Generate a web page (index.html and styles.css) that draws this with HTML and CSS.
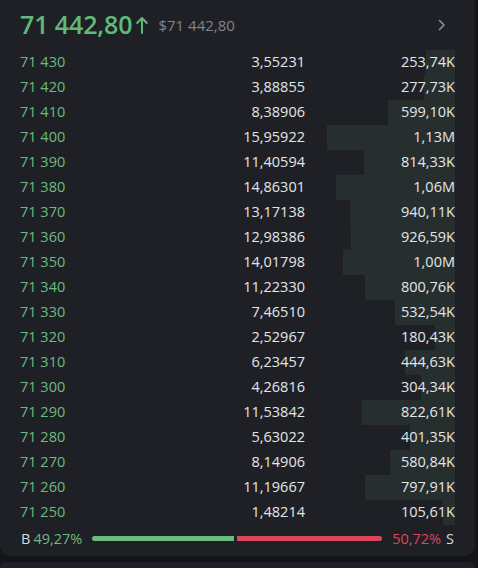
FILE: index.html
```html
<!DOCTYPE html>
<html>
<head>
<meta charset="utf-8">
<link rel="stylesheet" href="styles.css">
</head>
<body>
<div class="panel">
  <div class="header">
    <span class="last">71 442,80</span>
    <svg class="up" width="12" height="18" viewBox="0 0 12 18"><path d="M6 17V2M1.2 7L6 2l4.8 5" fill="none" stroke="#5fb97a" stroke-width="2" stroke-linecap="round" stroke-linejoin="round"/></svg>
    <span class="usd">$71 442,80</span>
    <svg class="chev" width="8" height="12" viewBox="0 0 8 12"><path d="M1.5 1.5L6 6l-4.5 4.5" fill="none" stroke="#8b8e95" stroke-width="1.6" stroke-linecap="round" stroke-linejoin="round"/></svg>
  </div>
  <div class="book">
    <div class="row"><span class="bar" style="width:29px"></span><span class="p">71 430</span><span class="q">3,55231</span><span class="t">253,74K</span></div>
    <div class="row"><span class="bar" style="width:31px"></span><span class="p">71 420</span><span class="q">3,88855</span><span class="t">277,73K</span></div>
    <div class="row"><span class="bar" style="width:67px"></span><span class="p">71 410</span><span class="q">8,38906</span><span class="t">599,10K</span></div>
    <div class="row"><span class="bar" style="width:128px"></span><span class="p">71 400</span><span class="q">15,95922</span><span class="t">1,13M</span></div>
    <div class="row"><span class="bar" style="width:91px"></span><span class="p">71 390</span><span class="q">11,40594</span><span class="t">814,33K</span></div>
    <div class="row"><span class="bar" style="width:119px"></span><span class="p">71 380</span><span class="q">14,86301</span><span class="t">1,06M</span></div>
    <div class="row"><span class="bar" style="width:105px"></span><span class="p">71 370</span><span class="q">13,17138</span><span class="t">940,11K</span></div>
    <div class="row"><span class="bar" style="width:104px"></span><span class="p">71 360</span><span class="q">12,98386</span><span class="t">926,59K</span></div>
    <div class="row"><span class="bar" style="width:112px"></span><span class="p">71 350</span><span class="q">14,01798</span><span class="t">1,00M</span></div>
    <div class="row"><span class="bar" style="width:90px"></span><span class="p">71 340</span><span class="q">11,22330</span><span class="t">800,76K</span></div>
    <div class="row"><span class="bar" style="width:60px"></span><span class="p">71 330</span><span class="q">7,46510</span><span class="t">532,54K</span></div>
    <div class="row"><span class="bar" style="width:20px"></span><span class="p">71 320</span><span class="q">2,52967</span><span class="t">180,43K</span></div>
    <div class="row"><span class="bar" style="width:50px"></span><span class="p">71 310</span><span class="q">6,23457</span><span class="t">444,63K</span></div>
    <div class="row"><span class="bar" style="width:34px"></span><span class="p">71 300</span><span class="q">4,26816</span><span class="t">304,34K</span></div>
    <div class="row"><span class="bar" style="width:93px"></span><span class="p">71 290</span><span class="q">11,53842</span><span class="t">822,61K</span></div>
    <div class="row"><span class="bar" style="width:45px"></span><span class="p">71 280</span><span class="q">5,63022</span><span class="t">401,35K</span></div>
    <div class="row"><span class="bar" style="width:65px"></span><span class="p">71 270</span><span class="q">8,14906</span><span class="t">580,84K</span></div>
    <div class="row"><span class="bar" style="width:90px"></span><span class="p">71 260</span><span class="q">11,19667</span><span class="t">797,91K</span></div>
    <div class="row"><span class="bar" style="width:12px"></span><span class="p">71 250</span><span class="q">1,48214</span><span class="t">105,61K</span></div>
  </div>
  <div class="footer">
    <span class="lbl">B</span><span class="buy">49,27%</span>
    <div class="ratio"><span class="g" style="flex:49.27"></span><span class="r" style="flex:50.72"></span></div>
    <span class="sell">50,72%</span><span class="lbl">S</span>
  </div>
</div>
<div class="panel2"></div>
</body>
</html>
```

FILE: styles.css
```css
html, body {
  margin: 0;
  padding: 0;
  background: #141518;
  font-family: "Open Sans", "Noto Sans", sans-serif;
  overflow: hidden;
}
.panel {
  width: 475px;
  background: #1f2025;
  border-radius: 0 0 10px 10px;
  padding-bottom: 5px;
}
.header {
  height: 44px;
  padding: 2px 20px 4px 20px;
  display: flex;
  align-items: center;
}
.last {
  font-size: 25px;
  font-weight: 600;
  color: #5fb97a;
  letter-spacing: -0.1px;
}
.up {
  margin-left: 4px;
  margin-top: 1px;
}
.usd {
  margin-left: 10px;
  font-size: 15px;
  color: #80848c;
  margin-top: 2px;
}
.chev {
  margin-left: auto;
  margin-right: 9px;
  margin-top: 1px;
}
.book {
  display: flex;
  flex-direction: column;
}
.row {
  position: relative;
  height: 25px;
  padding: 0 20px;
  display: grid;
  grid-template-columns: 1fr 120px 150px;
  align-items: center;
  font-size: 14.5px;
  line-height: 25px;
  color: #e4e5e7;
}
.row span { position: relative; top: -1px; }
.row .bar {
  position: absolute;
  top: 0;
  right: 20px;
  height: 25px;
  background: #272e2e;
}
.p { color: #6bbb7f; }
.q, .t { text-align: right; }
.footer {
  height: 26px;
  padding: 0 21px 0 21px;
  display: flex;
  align-items: center;
  font-size: 14.5px;
}
.lbl { color: #d8d9dc; }
.buy { color: #6bbb7f; margin-left: 3px; }
.sell { color: #dc465a; margin-right: 5px; }
.ratio {
  flex: 1;
  display: flex;
  gap: 3px;
  margin: 0 10px 0 10px;
  height: 5px;
}
.ratio .g { background: #6cbd7d; border-radius: 3px 0 0 3px; }
.ratio .r { background: #dc465a; border-radius: 0 3px 3px 0; }
.panel2 {
  width: 475px;
  height: 6px;
  margin-top: 6px;
  background: #1f2025;
  border-radius: 10px 10px 0 0;
}
```
